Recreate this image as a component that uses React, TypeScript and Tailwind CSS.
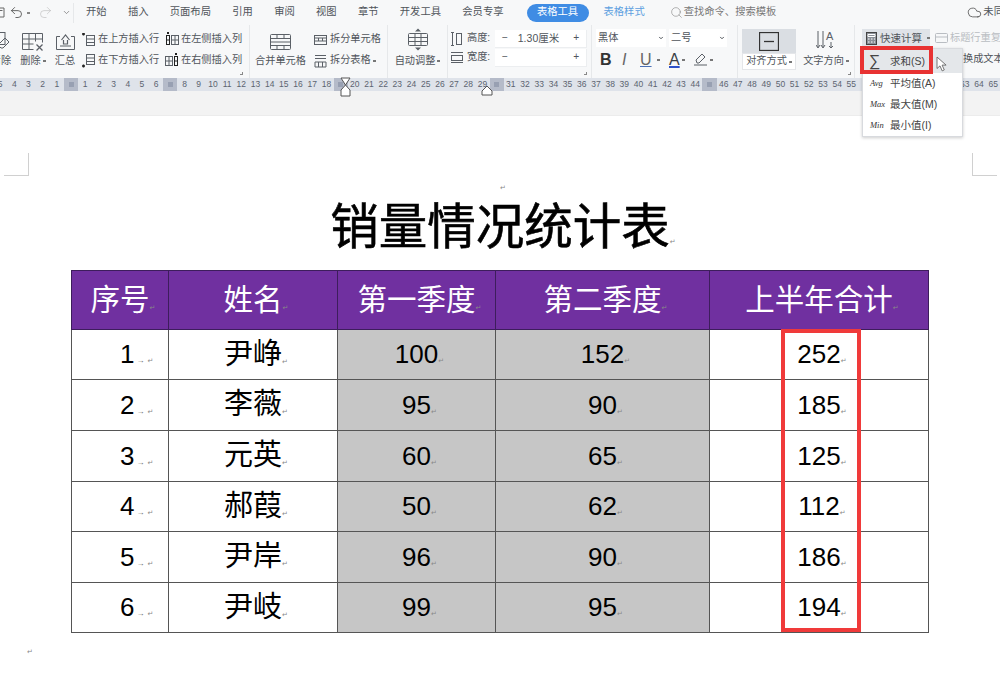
import React from "react";
import { Undo2, Redo2, Search, Cloud, ChevronDown } from "lucide-react";

const CJK = { fontFamily: '"Liberation Sans","Noto Sans CJK SC",sans-serif' };

function Svg({ w, h, children, className = "" }: { w: number; h: number; children: React.ReactNode; className?: string }) {
  return (
    <svg width={w} height={h} viewBox={`0 0 ${w} ${h}`} fill="none" stroke="currentColor" strokeWidth="1" className={"shrink-0 text-[#5b6067] " + className}>
      {children}
    </svg>
  );
}

function Caret() {
  return <span className="ml-[2px] inline-block h-[2px] w-[3px] bg-[#777] align-middle" />;
}

function Col({ w, label, caret, icon, border }: { w: string; label: string; caret?: boolean; icon: React.ReactNode; border?: boolean }) {
  return (
    <div className={`${w} flex shrink-0 flex-col items-center ${border ? "border-r border-[#e6e8ea]" : ""}`}>
      <div className="flex h-[29px] items-end justify-center pb-[3px]">{icon}</div>
      <div className="flex h-[14px] items-center whitespace-nowrap">
        {label}
        {caret && <Caret />}
      </div>
    </div>
  );
}

function Row({ icon, label, caret }: { icon: React.ReactNode; label: string; caret?: boolean }) {
  return (
    <div className="flex h-[21px] items-center whitespace-nowrap">
      <span className="flex w-[16px] shrink-0">{icon}</span>
      <span>{label}</span>
      {caret && <Caret />}
    </div>
  );
}

const GridIco = ({ mark }: { mark: "top" | "bottom" | "left" | "right" }) => (
  <Svg w={14} h={15}>
    {mark === "top" && (
      <>
        <rect x="4.5" y="3.5" width="8" height="10" />
        <path d="M4.5 7h8M4.5 10.5h8" />
        <path d="M0 2h3M1.5 1v2.5" strokeWidth="1.5" stroke="#222" />
      </>
    )}
    {mark === "bottom" && (
      <>
        <rect x="4.5" y="1.5" width="8" height="10" />
        <path d="M4.5 5h8M4.5 8.5h8" />
        <path d="M0 13h3M1.5 11.5v3" strokeWidth="1.5" stroke="#222" />
      </>
    )}
    {mark === "left" && (
      <>
        <rect x="6.5" y="3.5" width="7" height="9" />
        <path d="M10 3.5v9M6.5 8h7" />
        <rect x="1.5" y="3.5" width="3" height="9" stroke="#222" />
        <path d="M1.5 8h3" stroke="#222" />
        <path d="M3 0v2" stroke="#222" strokeWidth="2" />
      </>
    )}
    {mark === "right" && (
      <>
        <rect x="0.5" y="3.5" width="7" height="9" />
        <path d="M4 3.5v9M0.5 8h7" />
        <rect x="9.5" y="3.5" width="3" height="9" stroke="#222" />
        <path d="M9.5 8h3" stroke="#222" />
        <path d="M11 0v2" stroke="#222" strokeWidth="2" />
      </>
    )}
  </Svg>
);

function Ribbon() {
  return (
    <div className="flex h-[53px] shrink-0 bg-[#f7f8f9] text-[10.2px] leading-none text-[#50555b] -ml-[12px]">
      <Col
        w="w-[26px]"
        label="清除"
        icon={
          <Svg w={24} h={20}>
            <rect x="1" y="1.5" width="15" height="12" />
            <path d="M14 17l6-6-4-4-7 7 3 3z" />
          </Svg>
        }
      />
      <Col
        w="w-[38px]"
        label="删除"
        caret
        icon={
          <Svg w={24} h={19}>
            <path d="M1.5 1.5h20v9M1.5 1.5v16h11M8 1.5v16M14.5 1.5v8M1.5 7h20M1.5 12h11" />
            <path d="M15.5 12.5l6 6M21.5 12.5l-6 6" strokeWidth="1.3" />
          </Svg>
        }
      />
      <Col
        w="w-[26px]"
        label="汇总"
        icon={
          <Svg w={21} h={18}>
            <path d="M5 3.5H1.5v13h18v-13H16" />
            <path d="M6.5 7l4-5 4 5M8.5 7v4h4V7M5 13h11" strokeWidth="1.2" />
          </Svg>
        }
      />
      <div className="flex w-[85px] shrink-0 flex-col pl-[4px] pt-[4px]">
        <Row icon={<GridIco mark="top" />} label="在上方插入行" />
        <Row icon={<GridIco mark="bottom" />} label="在下方插入行" />
      </div>
      <div className="relative flex w-[87px] shrink-0 flex-col border-r border-[#e6e8ea] pl-[2px] pt-[4px]">
        <Row icon={<GridIco mark="left" />} label="在左侧插入列" />
        <Row icon={<GridIco mark="right" />} label="在右侧插入列" />
        <span className="absolute bottom-[3px] right-[6px] h-[3px] w-[3px] border-b border-r border-[#888]" />
      </div>
      <Col
        w="w-[61px]"
        label="合并单元格"
        icon={
          <Svg w={21} h={18}>
            <rect x="0.5" y="1.5" width="20" height="15" rx="1" />
            <path d="M0.5 9h20M7 1.5v4M14 1.5v4M7 12.5v4M14 12.5v4M0.5 5.5h20M0.5 12.5h20" />
          </Svg>
        }
      />
      <div className="flex w-[77px] shrink-0 flex-col border-r border-[#e6e8ea] pl-[3px] pt-[4px]">
        <Row
          icon={
            <Svg w={14} h={12}>
              <rect x="0.5" y="1.5" width="12" height="9" />
              <path d="M0.5 4h12M4.5 4v3M8.5 4v3M0.5 7h12" />
            </Svg>
          }
          label="拆分单元格"
        />
        <Row
          icon={
            <Svg w={14} h={14}>
              <path d="M1 1.5h11M1 4.5h11M1 8h11v5H1zM4.5 8v5M8.5 8v5" />
            </Svg>
          }
          label="拆分表格"
          caret
        />
      </div>
      <Col
        w="w-[60px]"
        label="自动调整"
        caret
        border
        icon={
          <Svg w={22} h={23}>
            <path d="M11 0.5l-3 3h6zM11 22.5l-3-3h6z" fill="#5b6067" stroke="none" />
            <rect x="1.5" y="5.5" width="19" height="12" rx="1" />
            <path d="M1.5 9.5h19M1.5 13.5h19M8 5.5v12M14 5.5v12" />
          </Svg>
        }
      />
      <div className="relative flex w-[144px] shrink-0 flex-col border-r border-[#e6e8ea] pl-[3px] pt-[4px]">
        {[
          { t: "高度:", v: "1.30厘米", a: true },
          { t: "宽度:", v: "", a: false },
        ].map((r) => (
          <div key={r.t} className="flex h-[19px] items-center">
            <span className="flex w-[16px] shrink-0">
              {r.a ? (
                <Svg w={11} h={14}>
                  <path d="M0 0.5h3M1.5 0.5v13M0 13.5h3" />
                  <rect x="5.5" y="1.5" width="5" height="11" />
                </Svg>
              ) : (
                <Svg w={12} h={13}>
                  <path d="M0 1.5h12M0 11.5h12" />
                  <rect x="0.5" y="4.5" width="11" height="5" />
                </Svg>
              )}
            </span>
            <span className="w-[28px] shrink-0">{r.t}</span>
            <div className="flex h-[18px] w-[92px] items-center border-b border-r border-[#eceef0] bg-white text-[#50555b]">
              <span className="w-[20px] text-center">−</span>
              <span className="w-[52px] pl-[3px] text-[10.5px]">{r.v}</span>
              <span className="w-[20px] text-center">+</span>
            </div>
          </div>
        ))}
        <span className="absolute bottom-[3px] right-[4px] h-[3px] w-[3px] border-b border-r border-[#888]" />
      </div>
      <div className="flex w-[146px] shrink-0 flex-col border-r border-[#e6e8ea] pl-[4px] pt-[4px]">
        <div className="flex h-[18px] gap-[3px]">
          <div className="flex w-[70px] items-center justify-between bg-white pl-[2px] pr-[2px]">
            黑体 <ChevronDown size={6} strokeWidth={4} />
          </div>
          <div className="flex w-[58px] items-center justify-between bg-white pl-[2px] pr-[2px]">
            二号 <ChevronDown size={6} strokeWidth={4} />
          </div>
        </div>
        <div className="flex h-[25px] items-center pl-[4px] text-[16px]" style={CJK}>
          <span className="w-[22px] font-bold text-[#333]">B</span>
          <span className="w-[18px] italic text-[#666]">I</span>
          <span className="w-[15px] text-[#666] underline decoration-[#4a6fb5]">U</span>
          <Caret />
          <span className="ml-[9px] w-[11px] text-[#3a3f46] underline decoration-[#2d50c8] decoration-2">A</span>
          <Caret />
          <span className="ml-[8px]">
            <Svg w={15} h={13}>
              <path d="M1 12h13M4 10l-1-3 6-6 3 3-6 6z" />
            </Svg>
          </span>
          <Caret />
        </div>
      </div>
      <div className="flex w-[60px] shrink-0 flex-col pl-[4px] pt-[4px]">
        <div className="flex h-[24px] w-[54px] items-center justify-center bg-[#dadee3]">
          <Svg w={20} h={19} className="text-[#333]">
            <rect x="0.5" y="0.5" width="19" height="18" strokeWidth="1.3" />
            <path d="M5 9.5h10" strokeWidth="1.3" />
          </Svg>
        </div>
        <div className="flex h-[17px] w-[54px] items-center justify-center border border-[#e4e6e9] bg-white">
          对齐方式
          <Caret />
        </div>
      </div>
      <div className="relative w-[57px] shrink-0 border-r border-[#e6e8ea]">
        <Col
          w="w-[56px]"
          label="文字方向"
          caret
          icon={
            <Svg w={20} h={21}>
              <path d="M2 1v16M7 1v16M0 15l2 3 2-3M5 15l2 3 2-3" />
              <text x="10" y="10" fontSize="11" fill="#5b6067" stroke="none">A</text>
              <path d="M15 12v6M13 16l2 2 2-2" />
            </Svg>
          }
        />
        <span className="absolute bottom-[3px] right-[3px] h-[3px] w-[3px] border-b border-r border-[#888]" />
      </div>
      <div className="flex flex-1 flex-col pl-[7px] pt-[4px]">
        <div className="flex h-[18px] items-center whitespace-nowrap">
          <div className="flex h-[18px] w-[68px] items-center gap-[3px] bg-[#dfe3e8] pl-[4px] text-[10.5px]">
            <Svg w={11} h={13} className="text-[#444]">
              <rect x="0.5" y="0.5" width="10" height="12" fill="#8a9098" />
              <path d="M2 2.5h7v2H2zM2 7h1.5M5 7h1.5M8 7h1M2 10h1.5M5 10h1.5M8 10h1" stroke="#fff" />
            </Svg>
            快速计算
            <Caret />
          </div>
          <div className="ml-[5px] flex items-center gap-[2px] text-[#b9bdc2]">
            <Svg w={13} h={13} className="text-[#b9bdc2]">
              <rect x="0.5" y="1.5" width="12" height="9" rx="1" />
              <path d="M0.5 5h12" />
            </Svg>
            标题行重复
          </div>
        </div>
        <div className="flex h-[24px] items-center whitespace-nowrap pl-[101px]">换成文本</div>
      </div>
    </div>
  );
}

function Ruler() {
  const nums = Array.from({ length: 71 }, (_, i) => i - 5);
  const blocks = [0, 7, 19, 30, 45];
  return (
    <div className="flex h-[13px] shrink-0 items-center overflow-hidden bg-[#dfe3ea] -ml-[7px] text-[8.5px] leading-none text-[#5c6470]" style={{ fontFamily: '"Liberation Sans",sans-serif' }}>
      {nums.map((n) =>
        blocks.includes(n) ? (
          <span key={n} className="flex h-[13px] w-[14.2px] shrink-0 items-center justify-center bg-[#b5bbc9]">
            <span className="h-[5px] w-[5px] bg-[#98a0b2]" />
          </span>
        ) : (
          <span key={n} className="h-[9px] w-[14.2px] shrink-0 text-center">
            {n >= 56 && n <= 62 ? "" : Math.abs(n)}
          </span>
        )
      )}
    </div>
  );
}

const Ret = () => (
  <span className="inline-block w-0 whitespace-nowrap align-baseline text-[7px] font-normal leading-none text-[#888] [-webkit-text-stroke:0]" style={{ fontFamily: '"DejaVu Sans",sans-serif' }}>
    ↵
  </span>
);

const rows = [
  ["1", "尹峥", "100", "152", "252", "h-[50px]"],
  ["2", "李薇", "95", "90", "185", "h-[51px]"],
  ["3", "元英", "60", "65", "125", "h-[51px]"],
  ["4", "郝葭", "50", "62", "112", "h-[50px]"],
  ["5", "尹岸", "96", "90", "186", "h-[51px]"],
  ["6", "尹岐", "99", "95", "194", "h-[50px]"],
];

function Sheet() {
  return (
    <div className="relative ml-[71px] w-[857px]">
      <table className="w-[857px] table-fixed border-collapse text-center text-black" style={CJK}>
        <colgroup>
          <col className="w-[97px]" />
          <col className="w-[169px]" />
          <col className="w-[158px]" />
          <col className="w-[214px]" />
          <col className="w-[219px]" />
        </colgroup>
        <thead>
          <tr className="h-[59px] bg-[#7030a0] text-[29.5px] font-normal text-white">
            {["序号", "姓名", "第一季度", "第二季度", "上半年合计"].map((t) => (
              <th key={t} className="border border-[#3d1d5c] p-0 font-normal">
                {t}
                <Ret />
              </th>
            ))}
          </tr>
        </thead>
        <tbody>
          {rows.map((r) => (
            <tr key={r[0]} className={`${r[5]} text-[26px]`}>
              <td className="border border-[#555] p-0 pl-[48px] text-left whitespace-nowrap">
                {r[0]}
                <span className="ml-[2px] text-[8px] text-[#666]">→</span>
                <span className="ml-[3px]"><Ret /></span>
              </td>
              <td className="border border-[#555] p-0 text-[29px]">
                {r[1]}
                <Ret />
              </td>
              <td className="border border-[#555] bg-[#c6c6c6] p-0">
                {r[2]}
                <Ret />
              </td>
              <td className="border border-[#555] bg-[#c6c6c6] p-0">
                {r[3]}
                <Ret />
              </td>
              <td className="border border-[#555] p-0">
                {r[4]}
                <Ret />
              </td>
            </tr>
          ))}
        </tbody>
      </table>
      <div className="pointer-events-none absolute left-[710px] top-[59px] h-[303px] w-[80px] border-[4px] border-[#f03a3a]" />
    </div>
  );
}

function Menu() {
  const items = [
    ["Avg", "平均值(A)"],
    ["Max", "最大值(M)"],
    ["Min", "最小值(I)"],
  ];
  return (
    <div className="absolute left-[862px] top-[48px] z-10 flex h-[89px] w-[101px] flex-col border border-[#d8dade] bg-white text-[10.5px] leading-none text-[#444] shadow-[0_1px_3px_rgba(0,0,0,0.2)]" style={CJK}>
      <div className="flex h-[24px] shrink-0 items-center bg-[#e4e7ea] pl-[6px]">
        <span className="w-[21px] text-[16px] text-[#444]">∑</span>
        <span>求和(S)</span>
        <svg width="11" height="16" viewBox="0 0 11 16" fill="#fff" stroke="#666" strokeWidth="0.9" className="ml-[11px] mt-[5px] shrink-0">
          <path d="M1 1v11.5l3-2.6 2.2 5 2.1-1-2.2-4.8h4z" />
        </svg>
      </div>
      {items.map(([a, b]) => (
        <div key={a} className="flex h-[21.5px] items-center pl-[7px]">
          <span className="w-[20px] text-[8.5px] italic text-[#333]" style={{ fontFamily: '"Liberation Serif",serif' }}>
            {a}
          </span>
          {b}
        </div>
      ))}
      <div className="absolute -left-[3px] -top-[3px] h-[28px] w-[73px] border-[4px] border-[#e83232]" />
    </div>
  );
}

export default function App() {
  const tabs = ["开始", "插入", "页面布局", "引用", "审阅", "视图", "章节", "开发工具", "会员专享"];
  return (
    <div className="relative flex h-[681px] w-[1000px] flex-col overflow-hidden bg-white" style={CJK}>
      <div className="flex h-[25px] shrink-0 items-center whitespace-nowrap bg-[#f7f8f9] text-[10.3px] leading-none text-[#50555b]">
        <div className="flex h-[20px] w-[74px] shrink-0 items-center border-r border-[#e6e8ea] pl-[9px]">
          <Undo2 size={15} strokeWidth={1.4} className="text-[#555]" />
          <span className="ml-[3px] h-[2px] w-[3px] bg-[#888]" />
          <Redo2 size={15} strokeWidth={1} className="ml-[8px] text-[#bbb]" />
          <ChevronDown size={9} strokeWidth={2} className="ml-[9px] text-[#777]" />
        </div>
        <div className="ml-[12px] flex shrink-0 gap-[21.3px]">
          {tabs.map((t) => (
            <span key={t}>{t}</span>
          ))}
        </div>
        <span className="ml-[23px] flex h-[18px] w-[62px] shrink-0 items-center justify-center rounded-full bg-[#3f8ce4] text-white">表格工具</span>
        <span className="ml-[15px] shrink-0 text-[#5c9fe0]">表格样式</span>
        <Search size={13} strokeWidth={1} className="ml-[25px] shrink-0 text-[#777]" />
        <span className="ml-[1px] shrink-0 text-[#777]">查找命令、搜索模板</span>
        <Cloud size={15} strokeWidth={1.2} className="ml-[191px] shrink-0 text-[#444]" />
        <span className="ml-[1px] shrink-0">未同步</span>
      </div>
      <Ribbon />
      <Ruler />
      <div className="h-[25px] shrink-0 border-b border-[#ececec] bg-[#f3f3f3]" />
      <div className="relative flex-1 bg-white">
        <span className="absolute left-[4px] top-[37px] h-[23px] w-[25px] border-b border-r border-[#d0d0d0]" />
        <span className="absolute right-[3px] top-[37px] h-[23px] w-[25px] border-b border-l border-[#d0d0d0]" />
        <div className="pl-[500px] pt-[61px] leading-none"><Ret /></div>
        <h1 className="-mt-[1px] h-[70px] text-center text-[48.5px] font-normal leading-[70px] text-black [-webkit-text-stroke:0.6px_black]">
          销量情况统计表
          <Ret />
        </h1>
        <div className="mt-[8px]">
          <Sheet />
        </div>
        <div className="pl-[27px] pt-[8px] leading-none"><Ret /></div>
      </div>
      <svg width="6" height="12" viewBox="0 0 6 12" fill="none" stroke="#666" strokeWidth="1" className="absolute left-0 top-[7px]">
        <path d="M0 1h4v9H0M0 3.5h2.5" />
      </svg>
      <svg width="11" height="20" viewBox="0 0 11 20" fill="#fff" stroke="#555" strokeWidth="1" className="absolute left-[340px] top-[77px]">
        <path d="M1 1h9L5.5 8zM5.5 8l4.5 5v6H1v-6z" />
      </svg>
      <svg width="12" height="12" viewBox="0 0 12 12" fill="#fff" stroke="#555" strokeWidth="1" className="absolute left-[481px] top-[85px]">
        <path d="M6 1l5 5v4H1V6z" />
      </svg>
      <Menu />
    </div>
  );
}
